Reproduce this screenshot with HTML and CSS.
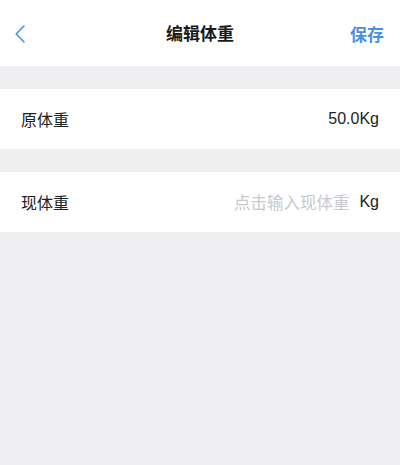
FILE: index.html
```html
<!DOCTYPE html>
<html lang="zh">
<head>
<meta charset="utf-8">
<link rel="stylesheet" href="styles.css">
</head>
<body>
<div class="page">
  <header class="nav">
    <span class="back">
      <svg width="12" height="20" viewBox="0 0 12 20"><path d="M10 2 L2.2 10 L10 18" fill="none" stroke="#4a90e2" stroke-width="1.6" stroke-linecap="round" stroke-linejoin="round"/></svg>
    </span>
    <h1 class="title">编辑体重</h1>
    <span class="save">保存</span>
  </header>
  <div class="row">
    <span class="label">原体重</span>
    <span class="value">50.0Kg</span>
  </div>
  <div class="row">
    <span class="label">现体重</span>
    <span class="input-wrap"><span class="placeholder">点击输入现体重</span><span class="unit">Kg</span></span>
  </div>
</div>
</body>
</html>
```
FILE: styles.css
```css
html, body {
  margin: 0;
  padding: 0;
  background: #efeef1;
}
body {
  font-family: "Noto Sans CJK SC", "Noto Sans", sans-serif;
  color: #222;
}
.page {
  width: 400px;
  min-height: 465px;
  display: flex;
  flex-direction: column;
  gap: 23px;
}
.nav {
  height: 66px;
  background: #fff;
  display: flex;
  align-items: center;
  justify-content: space-between;
  padding: 0 16px 0 14px;
  position: relative;
}
.back {
  display: flex;
  width: 40px;
  margin-top: 1px;
}
.title {
  position: absolute;
  left: 0;
  right: 0;
  top: 0;
  height: 66px;
  line-height: 66px;
  margin: 0;
  text-align: center;
  font-size: 17px;
  font-weight: 700;
  color: #1a1a1a;
  pointer-events: none;
}
.save {
  font-size: 17px;
  font-weight: 700;
  color: #4a90e2;
  position: relative;
}
.row {
  height: 60px;
  background: #fff;
  display: flex;
  align-items: center;
  justify-content: space-between;
  padding: 0 21px;
  font-size: 16px;
}
.label {
  color: #222;
}
.value {
  font-family: "Liberation Sans", "Noto Sans CJK SC", sans-serif;
  font-size: 16px;
  color: #222;
}
.input-wrap {
  display: flex;
  align-items: center;
  gap: 10px;
}
.placeholder {
  color: #c9c9cd;
  font-size: 16.5px;
}
.unit {
  font-family: "Liberation Sans", sans-serif;
  font-size: 16px;
  color: #222;
}
```
